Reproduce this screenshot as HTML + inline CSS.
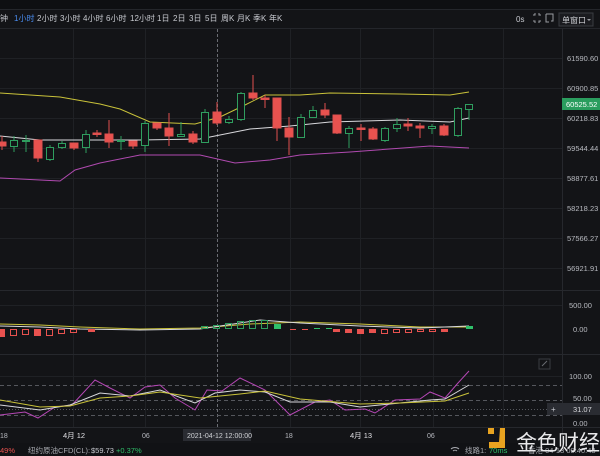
<!DOCTYPE html>
<html><head><meta charset="utf-8"><style>
html,body{margin:0;padding:0;background:#131417;width:600px;height:456px;overflow:hidden}
svg{display:block}
text{font-family:"Liberation Sans","Noto Sans CJK SC",sans-serif}
</style></head><body>
<svg width="600" height="456" viewBox="0 0 600 456" xmlns="http://www.w3.org/2000/svg">
<rect width="600" height="456" fill="#131417"/>
<rect width="600" height="9" fill="#0e0f12"/>
<line x1="0" y1="9.5" x2="600" y2="9.5" stroke="#24262b"/>
<line x1="0" y1="28.5" x2="600" y2="28.5" stroke="#24262b"/>
<g font-size="8" fill="#c8cad0">
<text x="0" y="21">钟</text>
<text x="14" y="21" fill="#4a8cf0">1小时</text>
<text x="37" y="21">2小时</text>
<text x="60" y="21">3小时</text>
<text x="83" y="21">4小时</text>
<text x="106" y="21">6小时</text>
<text x="130" y="21">12小时</text>
<text x="157" y="21">1日</text>
<text x="173" y="21">2日</text>
<text x="189" y="21">3日</text>
<text x="205" y="21">5日</text>
<text x="221" y="21">周K</text>
<text x="237" y="21">月K</text>
<text x="253" y="21">季K</text>
<text x="269" y="21">年K</text>
<text x="516" y="22">0s</text>
</g>
<g stroke="#9a9ca2" fill="none" stroke-width="1">
<path d="M533 15h2v-2M539 13v2h2M533 21h2v2M539 23v-2h2"/>
<path d="M546 14h7v7h-2M546 14v8h3"/>
</g>
<rect x="559" y="13" width="34" height="13" fill="#1a1b1f" stroke="#3a3c42"/>
<text x="562" y="23" font-size="8" fill="#d0d2d6">单窗口</text>
<path d="M587 19l2 2 2-2z" fill="#9a9ca2"/>
<g stroke="#1f2125" stroke-width="1">
<line x1="73.5" y1="29" x2="73.5" y2="427"/>
<line x1="145.5" y1="29" x2="145.5" y2="427"/>
<line x1="290.5" y1="29" x2="290.5" y2="427"/>
<line x1="360.5" y1="29" x2="360.5" y2="427"/>
<line x1="433.5" y1="29" x2="433.5" y2="427"/>
<line x1="503.5" y1="29" x2="503.5" y2="427"/>
<line x1="0" y1="58.5" x2="562" y2="58.5"/>
<line x1="0" y1="88.5" x2="562" y2="88.5"/>
<line x1="0" y1="118.5" x2="562" y2="118.5"/>
<line x1="0" y1="148.5" x2="562" y2="148.5"/>
<line x1="0" y1="178.5" x2="562" y2="178.5"/>
<line x1="0" y1="208.5" x2="562" y2="208.5"/>
<line x1="0" y1="238.5" x2="562" y2="238.5"/>
<line x1="0" y1="268.5" x2="562" y2="268.5"/>
<line x1="0" y1="305.5" x2="562" y2="305.5"/>
<line x1="0" y1="376.5" x2="562" y2="376.5"/>
</g>
<line x1="0" y1="290.5" x2="600" y2="290.5" stroke="#26282d"/>
<line x1="0" y1="354.5" x2="600" y2="354.5" stroke="#26282d"/>
<line x1="562.5" y1="29" x2="562.5" y2="443" stroke="#26282d"/>
<line x1="217.5" y1="29" x2="217.5" y2="427" stroke="#6a6c72" stroke-dasharray="3,2"/>
<g fill="none" stroke-width="1">
<polyline stroke="#c9c23a" points="0,93 60,97 100,104 120,109 150,122 195,124 220,117 245,105 265,95 300,95 330,93 400,94 450,95 469,92"/>
<polyline stroke="#d8d8dc" points="0,136 40,140 140,140 200,139 250,129 290,126 330,122 400,120 450,122 469,118"/>
<polyline stroke="#b04ab0" points="0,178 60,181 75,170 100,163 140,155 200,155 235,163 270,160 300,155 350,152 430,146 469,148"/>
</g>
<g stroke="#2f9e5f" fill="#131417" stroke-width="1">
<line x1="14" y1="136" x2="14" y2="152"/><rect x="10.5" y="140.5" width="7" height="6"/>
<line x1="26" y1="135" x2="26" y2="152"/><rect x="22.5" y="140.5" width="7" height="1"/>
<line x1="50" y1="145" x2="50" y2="161"/><rect x="46.5" y="147.5" width="7" height="12"/>
<line x1="62" y1="141" x2="62" y2="149"/><rect x="58.5" y="143.5" width="7" height="4"/>
<line x1="86" y1="130" x2="86" y2="153"/><rect x="82.5" y="134.5" width="7" height="13"/>
<line x1="121" y1="136" x2="121" y2="150"/><rect x="117.5" y="140.5" width="7" height="1"/>
<line x1="145" y1="121" x2="145" y2="152"/><rect x="141.5" y="123.5" width="7" height="22"/>
<line x1="181" y1="122" x2="181" y2="137"/><rect x="177.5" y="134.5" width="7" height="2"/>
<line x1="205" y1="109" x2="205" y2="143"/><rect x="201.5" y="112.5" width="7" height="30"/>
<line x1="229" y1="116" x2="229" y2="124"/><rect x="225.5" y="119.5" width="7" height="3"/>
<line x1="241" y1="92" x2="241" y2="121"/><rect x="237.5" y="93.5" width="7" height="26"/>
<line x1="301" y1="114" x2="301" y2="138"/><rect x="297.5" y="117.5" width="7" height="20"/>
<line x1="313" y1="106" x2="313" y2="118"/><rect x="309.5" y="110.5" width="7" height="7"/>
<line x1="349" y1="126" x2="349" y2="148"/><rect x="345.5" y="128.5" width="7" height="5"/>
<line x1="385" y1="127" x2="385" y2="142"/><rect x="381.5" y="128.5" width="7" height="12"/>
<line x1="397" y1="118" x2="397" y2="132"/><rect x="393.5" y="124.5" width="7" height="4"/>
<line x1="432" y1="124" x2="432" y2="134"/><rect x="428.5" y="126.5" width="7" height="2"/>
<line x1="458" y1="107" x2="458" y2="137"/><rect x="454.5" y="108.5" width="7" height="27"/>
<line x1="469" y1="104" x2="469" y2="120"/><rect x="465.5" y="104.5" width="7" height="5"/>
</g>
<g stroke="#e0504f" fill="#e8524f" stroke-width="1">
<line x1="2" y1="136" x2="2" y2="150"/><rect x="-2" y="142" width="8" height="4"/>
<line x1="38" y1="140" x2="38" y2="162"/><rect x="34" y="140" width="8" height="18"/>
<line x1="74" y1="143" x2="74" y2="150"/><rect x="70" y="143" width="8" height="5"/>
<line x1="97" y1="130" x2="97" y2="137"/><rect x="93" y="133" width="8" height="1.5"/>
<line x1="109" y1="120" x2="109" y2="148"/><rect x="105" y="134" width="8" height="8"/>
<line x1="133" y1="141" x2="133" y2="149"/><rect x="129" y="141" width="8" height="5"/>
<line x1="157" y1="123" x2="157" y2="130"/><rect x="153" y="123" width="8" height="5"/>
<line x1="169" y1="113" x2="169" y2="146"/><rect x="165" y="128" width="8" height="8"/>
<line x1="193" y1="131" x2="193" y2="144"/><rect x="189" y="134" width="8" height="8"/>
<line x1="217" y1="102" x2="217" y2="125"/><rect x="213" y="112" width="8" height="11"/>
<line x1="253" y1="75" x2="253" y2="100"/><rect x="249" y="93" width="8" height="5"/>
<line x1="265" y1="95" x2="265" y2="108"/><rect x="261" y="98" width="8" height="1.5"/>
<line x1="277" y1="98" x2="277" y2="141"/><rect x="273" y="98" width="8" height="30"/>
<line x1="289" y1="117" x2="289" y2="155"/><rect x="285" y="128" width="8" height="9"/>
<line x1="325" y1="103" x2="325" y2="118"/><rect x="321" y="110" width="8" height="5"/>
<line x1="337" y1="115" x2="337" y2="134"/><rect x="333" y="115" width="8" height="18"/>
<line x1="361" y1="124" x2="361" y2="141"/><rect x="357" y="128" width="8" height="1.5"/>
<line x1="373" y1="127" x2="373" y2="140"/><rect x="369" y="129" width="8" height="10"/>
<line x1="408" y1="118" x2="408" y2="131"/><rect x="404" y="124" width="8" height="2"/>
<line x1="420" y1="123" x2="420" y2="138"/><rect x="416" y="126" width="8" height="2"/>
<line x1="444" y1="124" x2="444" y2="136"/><rect x="440" y="126" width="8" height="9"/>
</g>
<g font-size="7.5" fill="#b8bac0">
<text x="567" y="61">61590.60</text>
<text x="567" y="91">60900.85</text>
<text x="567" y="121">60218.83</text>
<text x="567" y="151">59544.44</text>
<text x="567" y="181">58877.61</text>
<text x="567" y="211">58218.23</text>
<text x="567" y="241">57566.27</text>
<text x="567" y="271">56921.91</text>
<text x="569" y="308">500.00</text>
<text x="573" y="332">0.00</text>
<text x="569" y="379">100.00</text>
<text x="573" y="401">50.00</text>
<text x="573" y="426">0.00</text>
</g>
<rect x="562" y="98" width="38" height="12" fill="#2a9d5e"/>
<text x="566" y="107" font-size="7.5" fill="#fff">60525.52</text>
<g fill="none" stroke-width="1">
<polyline stroke="#c9c23a" points="0,324 40,325 80,327 140,329 200,328 250,324 300,322 360,324 420,327 469,327"/>
<polyline stroke="#d8d8dc" points="0,326 40,327 80,329 140,330 200,329 240,323 260,320 300,323 360,326 420,328 469,326"/>
</g>
<g fill="#e8524f">
<rect x="0" y="329" width="5" height="8"/><rect x="34" y="329" width="7" height="7"/><rect x="88" y="329" width="7" height="3"/><rect x="333" y="329" width="7" height="3"/><rect x="345" y="329" width="7" height="4"/><rect x="357" y="329" width="7" height="5"/><rect x="369" y="329" width="7" height="4"/><rect x="441" y="329" width="7" height="3"/>
<rect x="290" y="329" width="6" height="1"/><rect x="302" y="329" width="6" height="1"/>
</g>
<g fill="none" stroke="#e8524f">
<rect x="10.5" y="329.5" width="6" height="6"/><rect x="22.5" y="329.5" width="6" height="5"/><rect x="46.5" y="329.5" width="6" height="6"/><rect x="58.5" y="329.5" width="6" height="4"/><rect x="70.5" y="329.5" width="6" height="3"/><rect x="381.5" y="329.5" width="6" height="4"/><rect x="393.5" y="329.5" width="6" height="3"/><rect x="405.5" y="329.5" width="6" height="3"/><rect x="417.5" y="329.5" width="6" height="2"/><rect x="429.5" y="329.5" width="6" height="2"/>
</g>
<g fill="none" stroke="#2f9e5f">
<rect x="201.5" y="326.5" width="6" height="2"/><rect x="213.5" y="325.5" width="6" height="3"/><rect x="225.5" y="323.5" width="6" height="5"/><rect x="237.5" y="321.5" width="6" height="7"/><rect x="249.5" y="320.5" width="6" height="8"/><rect x="261.5" y="320.5" width="6" height="8"/>
</g>
<rect x="274" y="324" width="7" height="5" fill="#2fc06a"/>
<rect x="314" y="328" width="6" height="1" fill="#2fc06a"/><rect x="326" y="328" width="6" height="1" fill="#2fc06a"/><rect x="466" y="326" width="7" height="3" fill="#2fc06a"/>
<g stroke="#55575d" stroke-dasharray="4,3">
<line x1="0" y1="385.5" x2="562" y2="385.5"/>
<line x1="0" y1="400.5" x2="562" y2="400.5"/>
<line x1="0" y1="415.5" x2="562" y2="415.5"/>
</g>
<line x1="0" y1="409.5" x2="562" y2="409.5" stroke="#55575d" stroke-dasharray="1,2"/>
<g fill="none" stroke-width="1">
<polyline stroke="#b547b5" points="0,415 25,412 38,418 55,407 72,405 95,380 110,388 130,398 145,387 160,385 175,398 195,410 207,390 222,391 240,378 265,390 290,415 315,402 330,400 345,410 365,409 375,413 395,400 420,399 430,392 445,398 458,383 469,371"/>
<polyline stroke="#d8d8dc" points="0,405 40,410 70,405 100,393 130,396 160,390 195,403 215,393 240,390 265,392 290,402 330,402 360,407 390,404 430,400 445,399 469,385"/>
<polyline stroke="#c9c23a" points="0,400 40,407 70,406 100,398 130,396 160,392 200,398 240,394 265,391 300,399 360,404 400,403 445,401 469,393"/>
</g>
<rect x="539" y="359" width="11" height="10" fill="none" stroke="#3a3c42"/>
<path d="M542 366l5-5" stroke="#6a6c72"/>
<rect x="547" y="403" width="53" height="12" fill="#2a2c32"/>
<text x="551" y="412" font-size="8" fill="#c8cad0">+</text>
<text x="573" y="412" font-size="7.5" fill="#d8d8dc">31.07</text>
<line x1="0" y1="427.5" x2="600" y2="427.5" stroke="#26282d"/>
<g font-size="7" fill="#b8bac0">
<text x="0" y="438">18</text>
<text x="63" y="438" fill="#e0e0e4" font-size="7.5">4月 12</text>
<text x="142" y="438">06</text>
<text x="285" y="438">18</text>
<text x="350" y="438" fill="#e0e0e4" font-size="7.5">4月 13</text>
<text x="427" y="438">06</text>
</g>
<rect x="183" y="429" width="68" height="12" fill="#2a2c32"/>
<text x="187" y="438" font-size="7" fill="#d0d2d6">2021-04-12 12:00:00</text>
<rect x="0" y="443" width="600" height="13" fill="#111215"/>
<g font-size="7.5">
<text x="0" y="453" fill="#e8524f">49%</text>
<text x="28" y="453" fill="#a8aab0">纽约原油CFD(CL):</text>
<text x="91" y="453" fill="#c8cad0">$59.73</text>
<text x="116" y="453" fill="#2fc06a">+0.37%</text>
<text x="465" y="453" fill="#a8aab0">线路1:</text>
<text x="489" y="453" fill="#2fc06a">70ms</text>
<text x="528" y="453" fill="#a8aab0">香港 04-13 09:40:43</text>
</g>
<path d="M451 449a6 6 0 0 1 8 0M453 451a3 3 0 0 1 4 0" stroke="#a8aab0" fill="none"/>
<rect x="488" y="428" width="6" height="6" fill="#e8a320"/>
<path d="M500 428h5v20h-16v-6h10z" fill="#e8a320"/>
<text x="516" y="450" font-size="21" fill="#e8e8ea">金色财经</text>
</svg>
</body></html>
